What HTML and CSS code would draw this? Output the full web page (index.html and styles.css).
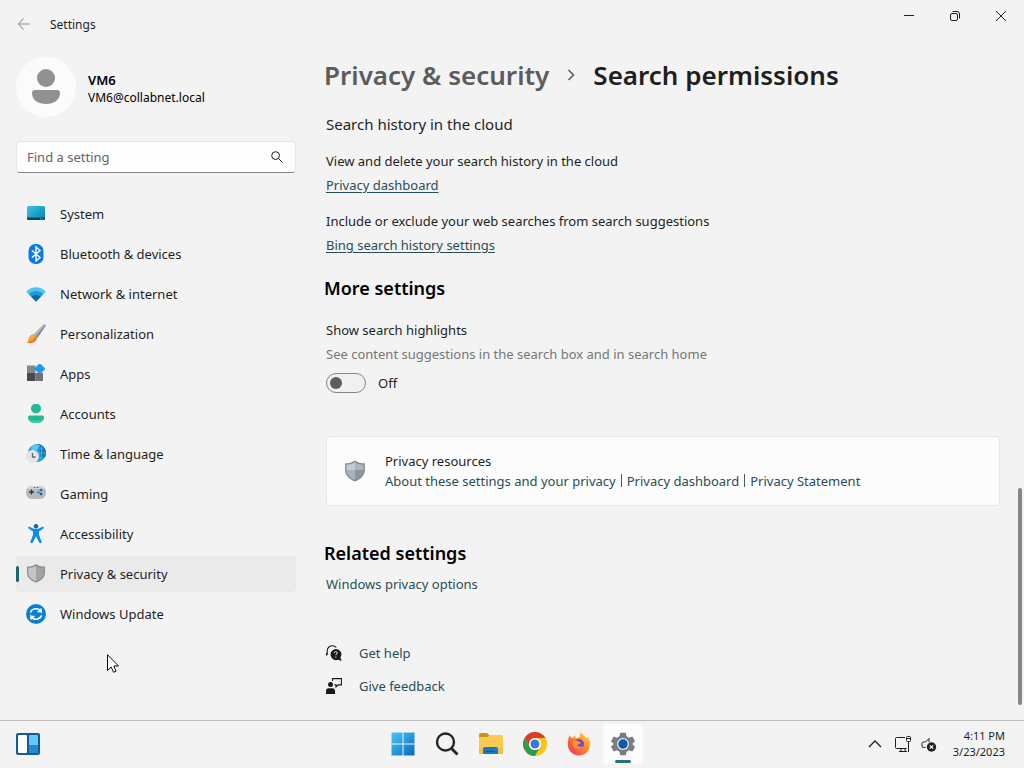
FILE: index.html
```html
<!DOCTYPE html>
<html lang="en">
  <head>
    <meta charset="UTF-8" />
    <meta name="viewport" content="width=device-width, initial-scale=1.0" />
    <title>Settings</title>
    <link rel="stylesheet" href="styles.css" />
  </head>
  <body>
    <!-- Title bar -->
    <header class="titlebar">
      <button type="button" class="back" aria-label="Back" disabled>
        <svg width="14" height="14" viewBox="0 0 14 14"><path d="M13 7H1.500M6.500 1.500 1.200 7l5.300 5.500" fill="none" stroke="currentColor" stroke-width="1.300" /></svg>
      </button>
      <span class="app-name">Settings</span>
      <div class="window-buttons">
        <button type="button" aria-label="Minimize">
          <svg width="12" height="12" viewBox="0 0 12 12"><path d="M1 5.500h10" stroke="currentColor" /></svg>
        </button>
        <button type="button" aria-label="Restore">
          <svg width="12" height="12" viewBox="0 0 12 12" fill="none" stroke="currentColor"><rect x="1.500" y="3.500" width="7" height="7" rx="1.500" /><path d="M3.500 1.500h4.500a2.500 2.500 0 0 1 2.500 2.500v4.500" /></svg>
        </button>
        <button type="button" aria-label="Close">
          <svg width="12" height="12" viewBox="0 0 12 12"><path d="m1 1 10 10M11 1 1 11" stroke="currentColor" /></svg>
        </button>
      </div>
    </header>

    <div class="window">
      <!-- Sidebar -->
      <aside class="sidebar">
        <div class="account">
          <span class="avatar">
            <svg width="28" height="36" viewBox="0 0 28 36" fill="#919191"><circle cx="14" cy="9" r="9" /><path d="M3 21h22a3 3 0 0 1 3 3c0 7-6 11-14 11S0 31 0 24a3 3 0 0 1 3-3z" /></svg>
          </span>
          <div class="account-text">
            <div class="account-name">VM6</div>
            <div>VM6@collabnet.local</div>
          </div>
        </div>

        <form class="search">
          <input type="text" placeholder="Find a setting" aria-label="Find a setting" />
          <button type="button" aria-label="Search">
            <svg width="12" height="12" viewBox="0 0 12 12" fill="none" stroke="currentColor"><circle cx="4.600" cy="4.600" r="3.900" /><path d="m7.500 7.500 4 4" /></svg>
          </button>
        </form>

        <nav class="menu">
          <a href="#">
            <svg width="20" height="20" viewBox="0 0 20 20">
              <defs><linearGradient id="sys" x2="1" y2="1"><stop stop-color="#35c7e6" /><stop offset="1" stop-color="#0b7fb0" /></linearGradient></defs>
              <rect x="1" y="2" width="18" height="14" rx="1.500" fill="url(#sys)" /><path d="M1 13.500h18v1a1.500 1.500 0 0 1-1.500 1.500h-15A1.500 1.500 0 0 1 1 14.500z" fill="#0a4766" /><path d="M14 14.800h1m1 0h1" stroke="#58c7e8" />
            </svg>
            System
          </a>
          <a href="#">
            <svg width="20" height="20" viewBox="0 0 20 20"><rect x="2.500" width="15" height="20" rx="7" fill="#0a7ae6" /><path d="m6 6.500 8 7-4 3.500V3l4 3.500-8 7" fill="none" stroke="#fff" stroke-width="1.400" /></svg>
            Bluetooth &amp; devices
          </a>
          <a href="#">
            <svg width="20" height="20" viewBox="0 0 20 20"><path d="M0 7.500Q10-1 20 7.500L10 17.500z" fill="#4cc8f0" /><path d="M2.500 10Q10 4 17.500 10L10 17.500z" fill="#2098dc" /><path d="M5.300 12.800Q10 9 14.700 12.800L10 17.500z" fill="#1262ae" /></svg>
            Network &amp; internet
          </a>
          <a href="#">
            <svg width="20" height="20" viewBox="0 0 20 20"><path d="M17.500.8c1.500-1 2.700.2 1.800 1.700L11.500 14 7.600 10.500z" fill="#858a92" /><path d="M17.500.8c.7-.5 1.400-.4 1.800 0L9.500 12.200 7.600 10.500z" fill="#b5b8bd" /><path d="M7.600 10.300 11 13.500c.5 4-4.500 7-10.500 5 2-.6 1.800-2 2.300-4 .6-2.500 2.700-4 4.800-4.200z" fill="#ef8129" /><path d="M7.600 10.300 9 11.700c-.5 3-4 5-8.500 6.800 2-.6 1.800-2 2.300-4 .6-2.500 2.700-4 4.800-4.200z" fill="#f8a651" /></svg>
            Personalization
          </a>
          <a href="#">
            <svg width="20" height="20" viewBox="0 0 20 20"><path d="M1 1.500h8.500V9H1z" fill="#85888b" /><path d="M1 9h8.500v8H1z" fill="#484b4e" /><path d="M9.500 9H17v8H9.500z" fill="#707376" /><rect x="9.800" y=".8" width="8" height="8" rx="1" fill="#2199e4" transform="rotate(45 13.800 4.800)" /></svg>
            Apps
          </a>
          <a href="#">
            <svg width="20" height="20" viewBox="0 0 20 20"><circle cx="10" cy="4.500" r="5" fill="#24b994" /><path d="M4 11.500h12a2 2 0 0 1 2 2c0 3.700-3.500 5.500-8 5.500s-8-1.800-8-5.500a2 2 0 0 1 2-2z" fill="#24b994" /><path d="M2.200 15C4 17.500 16 17.500 17.800 15c-1 2.800-4 4-7.800 4s-6.800-1.200-7.800-4z" fill="#43cda7" /></svg>
            Accounts
          </a>
          <a href="#">
            <svg width="20" height="20" viewBox="0 0 20 20"><circle cx="11" cy="9" r="9" fill="#22a2d8" /><path d="M11 0a9 9 0 0 1 7.800 13.500c-3 .5-5-1-4.500-3.500s-2-4-3.300-5z" fill="#1678bd" /><path d="M5 3c3-3 7-3 9-1l-3 4-5 1z" fill="#55cce7" /><path d="M11 0v9m-6-4h12m-5 4h8M15.500 2v13" stroke="#64c7ea" stroke-width=".600" /><circle cx="6.500" cy="12.500" r="6.500" fill="#e5e5e7" /><path d="M6.500 9v4h3" fill="none" stroke="#646775" stroke-width="1.300" /></svg>
            Time &amp; language
          </a>
          <a href="#">
            <svg width="20" height="20" viewBox="0 0 20 20"><rect y="2" width="20" height="13" rx="6" fill="#b5babf" /><path d="M1 5c1-2 3-3 5-3h8c2 0 4 1 5 3z" fill="#d1d4d7" /><path d="M5.500 5.500v5M3 8h5" stroke="#33383d" stroke-width="1.300" /><path d="M8 3.500h1.500m1.500 0h1.500" stroke="#596069" /><circle cx="15" cy="6" r="1.500" fill="#1e79b8" /><circle cx="12.500" cy="8.500" r="1.300" fill="#4d83a8" /><circle cx="15" cy="10" r="1.300" fill="#155e9d" /></svg>
            Gaming
          </a>
          <a href="#">
            <svg width="20" height="20" viewBox="0 0 20 20"><circle cx="10" cy="2.200" r="2.200" fill="#1465ae" /><path d="m3.500 2.700 4 2.100h5l4-2.100c1.200-.4 1.800 1.200.9 1.800L13 7.500v3.200l2.600 7c.3 1.500-1.700 2-2.400.7L10 12.300l-3.200 6.100c-.7 1.300-2.700.8-2.400-.7l2.600-7V7.500L2.600 4.500c-.9-.6-.3-2.200.9-1.800z" fill="#0c8ce4" /></svg>
            Accessibility
          </a>
          <a href="#" class="active" aria-current="page">
            <svg width="20" height="20" viewBox="0 0 20 20"><path d="M10 0c2.500 2 5.500 2.500 9 2.500v6c0 5-4 8.500-9 10-5-1.500-9-5-9-10v-6C4.500 2.500 7.500 2 10 0z" fill="#8b8e91" /><path d="M10 1.700C7.800 3.200 5.200 3.700 2.300 3.800v4.700c0 4.300 3.300 7.200 7.700 8.600z" fill="#c3c5c7" /><path d="M10 1.700c2.200 1.500 4.800 2 7.700 2.100v4.700c0 4.300-3.300 7.200-7.700 8.600z" fill="#a1a4a7" /></svg>
            Privacy &amp; security
          </a>
          <a href="#">
            <svg width="20" height="20" viewBox="0 0 20 20"><circle cx="10" cy="10" r="10" fill="#0d7fd3" /><path d="M4.500 8.500C6 4 12.500 3.500 15 7.500V4.500M15 7.500h-3.500M15.500 11.500C14 16 7.500 16.500 5 12.500v3M5 12.500h3.500" fill="none" stroke="#fff" stroke-width="1.500" /></svg>
            Windows Update
          </a>
        </nav>
      </aside>

      <!-- Page content -->
      <main class="content">
        <h1 class="breadcrumb">
          <a href="#">Privacy &amp; security</a>
          <svg width="8" height="12" viewBox="0 0 8 12"><path d="m1.500 1 5 5-5 5" fill="none" stroke="#5c5c5c" stroke-width="1.600" /></svg>
          <span>Search permissions</span>
        </h1>

        <section class="cloud">
          <h3>Search history in the cloud</h3>
          <div class="entry">
            <p>View and delete your search history in the cloud</p>
            <a href="#" class="underlined">Privacy dashboard</a>
          </div>
          <div class="entry">
            <p>Include or exclude your web searches from search suggestions</p>
            <a href="#" class="underlined">Bing search history settings</a>
          </div>
        </section>

        <section class="more">
          <h2>More settings</h2>
          <p>Show search highlights</p>
          <p class="hint">See content suggestions in the search box and in search home</p>
          <label class="toggle">
            <input type="checkbox" role="switch" aria-label="Show search highlights" />
            <span>Off</span>
          </label>
        </section>

        <section class="card">
          <svg width="22" height="22" viewBox="0 0 20 20"><path d="M10 .5c2.500 2 5.500 2.500 9 2.500v6c0 5-4 8.500-9 10.500C5 17.500 1 14 1 9V3c3.500 0 6.500-.5 9-2.500z" fill="#858b91" /><path d="M10 2C7.500 3.700 5 4 2.200 4.200V9H10z" fill="#c0cdd5" /><path d="M10 2c2.500 1.700 5 2 7.800 2.200V9H10z" fill="#adb5bc" /><path d="M2.200 9H10v9.200C5.500 16.500 2.500 13.500 2.200 9z" fill="#a9b3ba" /><path d="M17.800 9H10v9.200c4.500-1.700 7.500-4.700 7.800-9.200z" fill="#8c949c" /></svg>
          <div>
            <p>Privacy resources</p>
            <div class="links">
              <a href="#">About these settings and your privacy</a>
              <a href="#">Privacy dashboard</a>
              <a href="#">Privacy Statement</a>
            </div>
          </div>
        </section>

        <section class="related">
          <h2>Related settings</h2>
          <a href="#">Windows privacy options</a>
        </section>

        <div class="support">
          <a href="#">
            <svg width="16" height="16" viewBox="0 0 16 16"><path d="M1.200 10V6C1.200 2.500 4 .7 6.500.7c1.800 0 3 .6 3.800 1.800M.5 8v2.500" fill="none" stroke="#1a1a1a" stroke-width="1.100" /><path d="M9.700 4a5.500 5.500 0 0 1 4.700 8.600L15.700 16l-3.500-1.200A5.600 5.600 0 1 1 9.700 4z" fill="#1a1a1a" /><path d="M8.200 8c.2-2 3.200-1.800 3 0-.1 1-1.400 1-1.400 2.200M9.800 11.500v1.100" fill="none" stroke="#f3f3f3" /></svg>
            Get help
          </a>
          <a href="#">
            <svg width="16" height="16" viewBox="0 0 16 16"><circle cx="4.500" cy="6.500" r="2.500" fill="#1a1a1a" /><path d="M2.500 10.200H6.500q2.500 0 2.500 3V16H0v-2.800q0-3 2.500-3z" fill="#1a1a1a" /><path d="M6.500 3V.6h8.900v6.300h-3.200L10 9V6.900H8.500" fill="none" stroke="#1a1a1a" stroke-width="1.100" /></svg>
            Give feedback
          </a>
        </div>
      </main>

      <div class="scrollbar"><div class="thumb"></div></div>
    </div>

    <!-- Taskbar -->
    <footer class="taskbar">
      <button type="button" class="widgets" aria-label="Widgets">
        <svg width="24" height="22" viewBox="0 0 24 22"><rect width="24" height="22" rx="2" fill="#155b91" /><rect x="2" y="2" width="9" height="18" rx="1" fill="#fafcfd" /><rect x="13" y="2" width="9" height="18" rx="1" fill="#64c9f7" /><path d="M13 12h9v7a1 1 0 0 1-1 1h-7a1 1 0 0 1-1-1z" fill="#2388d6" /></svg>
      </button>

      <div class="apps">
        <button type="button" aria-label="Start">
          <svg width="24" height="24" viewBox="0 0 24 24">
            <defs><linearGradient id="win" gradientUnits="userSpaceOnUse" x1="0" y1="0" x2="24" y2="24"><stop stop-color="#4dcaf4" /><stop offset="1" stop-color="#0467c1" /></linearGradient></defs>
            <path d="M1 .5h10.500V11.500H.5V1zM12.500.5h11v11h-11zM.5 12.500h11v11H.5zM12.500 12.500h11v11h-11z" fill="url(#win)" />
          </svg>
        </button>
        <button type="button" aria-label="Search">
          <svg width="24" height="24" viewBox="0 0 24 24" fill="none" stroke="#252525"><circle cx="10.500" cy="10" r="8.500" stroke-width="2.400" /><path d="m16.500 16.500 6 6" stroke-width="2.800" /></svg>
        </button>
        <button type="button" aria-label="File Explorer">
          <svg width="24" height="24" viewBox="0 0 24 24"><path d="M0 3q0-2 2-2h6l3 3-2 3H0z" fill="#c79518" /><path d="M0 5h9l2-2h12q1 0 1 1v17q0 1-1 1H1q-1 0-1-1z" fill="#f9cb50" /><path d="M0 16h24v5q0 1-1 1H1q-1 0-1-1z" fill="#f0be45" /><path d="M4 22v-5q0-2 2-2h11q2 0 2 2v5z" fill="#1a78c5" /><path d="M7 19.500h9" stroke="#115493" /></svg>
        </button>
        <button type="button" aria-label="Chrome">
          <svg width="24" height="24" viewBox="0 0 24 24"><circle cx="12" cy="12" r="12" fill="#fbc41b" /><path d="M1.600 6a12 12 0 0 1 20.800 0H12a6 6 0 0 0-5.200 9z" fill="#dc3d31" /><path d="M1.600 6a12 12 0 0 0 10.400 18l5.200-9a6 6 0 0 1-10.400 0z" fill="#2f9c50" /><circle cx="12" cy="12" r="6" fill="#fff" /><circle cx="12" cy="12" r="4.500" fill="#3879dc" /></svg>
        </button>
        <button type="button" aria-label="Firefox">
          <svg width="24" height="24" viewBox="0 0 24 24">
            <defs><linearGradient id="fox" x1="1" x2="0" y2="1"><stop stop-color="#ffe344" /><stop offset=".450" stop-color="#ff8b29" /><stop offset="1" stop-color="#ee2463" /></linearGradient></defs>
            <path d="M2.500 3.500 4.500 6l1.800-.3L8.500 3v3.500L13 5c-.5-2 0-3.500 1.500-4.500 1 2.500 3.500 3.500 5.500 5.500l.5-1.500c2.500 3 3 6 2.500 9.500C22 20 17.500 23.500 12 23.500S1 19 1 13c0-4 0-6.500 1.500-9.500z" fill="url(#fox)" /><circle cx="12" cy="12" r="5" fill="#7b45c5" /><path d="M6 9.500c2.500-1.500 4-1 5.500.3l2.500.4c-.6 1.500-2 1.500-3 2.300-1.500 1.500.5 3 5 2-2 3.500-9 3-10-1.500z" fill="#ff9a28" />
          </svg>
        </button>
        <button type="button" class="open" aria-label="Settings">
          <svg width="24" height="24" viewBox="0 0 24 24"><path d="M9.200.8h5.600l.8 3.500 2.400 1.400 3.400-1.100 2.600 4.700-2.600 2.500v.4l2.600 2.500-2.600 4.700-3.400-1.100-2.400 1.400-.8 3.500H9.200l-.8-3.500L6 18.300l-3.400 1.100L0 14.700l2.600-2.500v-.4L0 9.300l2.600-4.700L6 5.700l2.400-1.400z" fill="#797d81" /><circle cx="12" cy="12" r="6" fill="#dfeaf3" /><circle cx="12" cy="12" r="4.700" fill="#1057a5" /></svg>
        </button>
      </div>

      <div class="tray">
        <button type="button" aria-label="Show hidden icons">
          <svg width="14" height="8" viewBox="0 0 14 8"><path d="m1 7 6-6 6 6" fill="none" stroke="currentColor" stroke-width="1.300" /></svg>
        </button>
        <button type="button" class="network" aria-label="Network">
          <svg width="16" height="16" viewBox="0 0 16 16" fill="none" stroke="currentColor"><path d="M10 1.500H1.500q-1 0-1 1v9q0 1 1 1h10M4 15.500h8M6 12.500v3m4-3v3M13.500 5.500V16" /><rect x="11.500" y=".500" width="4" height="5" rx="1" /><path d="M11.500 2.500h4" /></svg>
        </button>
        <button type="button" aria-label="Volume muted">
          <svg width="16" height="16" viewBox="0 0 16 16"><path d="M4.500 11.500H2.500q-1.500 0-1.500-1.500V7.500Q1 6 2.500 6h2L8 2.500V6" fill="none" stroke="currentColor" /><circle cx="10.500" cy="11" r="4.700" fill="#222" /><path d="m8.800 9.300 3.400 3.400m0-3.400-3.400 3.400" stroke="#fff" stroke-width="1.200" /></svg>
        </button>
        <div class="clock">
          <div>4:11 PM</div>
          <div>3/23/2023</div>
        </div>
      </div>
    </footer>

    <!-- Mouse pointer -->
    <svg class="pointer" width="12" height="19" viewBox="0 0 12 19"><path d="M.5.700v15.800l3.700-3.500 2.400 5.300 2.500-1.100-2.300-5.200h4.700z" fill="#fff" stroke="#111" /></svg>
  </body>
</html>
```
FILE: styles.css
```css
* {
  box-sizing: border-box;
}

body {
  position: relative;
  display: flex;
  flex-direction: column;
  min-height: 100vh;
  margin: 0;
  background-color: #f3f3f3;
  color: #1f1f1f;
  font-family: "Noto Sans", "Open Sans", sans-serif;
  font-size: 13px;
  line-height: 20px;
}

h1,
h2,
h3,
p {
  margin: 0;
}

a {
  color: #284e53;
  text-decoration: none;
}

button {
  display: flex;
  align-items: center;
  justify-content: center;
  padding: 0;
  border: 0;
  background: none;
  color: inherit;
}

svg {
  display: block;
  flex-shrink: 0;
}

/* Title bar */
.titlebar {
  display: flex;
  align-items: center;
  height: 48px;
  padding-left: 16px;
}

.back {
  width: 16px;
  margin-right: 18px;
  color: #b0b0b0;
}

.app-name {
  padding-top: 2px;
  font-size: 12px;
}

.window-buttons {
  display: flex;
  align-self: flex-start;
  margin-left: auto;
}

.window-buttons button {
  width: 46px;
  height: 32px;
}

/* Window */
.window {
  display: flex;
  flex: 1;
}

.sidebar {
  width: 296px;
  padding: 9px 0 0 16px;
}

.account {
  display: flex;
  align-items: center;
  gap: 12px;
  color: #000;
  font-size: 12px;
  line-height: 18px;
}

.account-text {
  padding-top: 3px;
}

.avatar {
  display: flex;
  align-items: center;
  justify-content: center;
  width: 60px;
  height: 60px;
  border-radius: 50%;
  background-color: #fbfbfb;
}

.account-name {
  font-size: 13px;
  font-weight: 600;
}

.search {
  display: flex;
  align-items: center;
  height: 32px;
  margin-top: 24px;
  padding: 0 12px 0 10px;
  border: 1px solid #e6e6e6;
  border-bottom-color: #868686;
  border-radius: 4px;
  background-color: #fdfdfd;
}

.search input {
  flex: 1;
  min-width: 0;
  padding: 0;
  border: 0;
  outline: 0;
  background: none;
  font: inherit;
}

.search input::placeholder {
  color: #666;
}

.menu {
  display: flex;
  flex-direction: column;
  gap: 4px;
  margin-top: 23px;
}

.menu a {
  display: flex;
  align-items: center;
  gap: 14px;
  height: 36px;
  padding-left: 10px;
  border-radius: 4px;
  color: #1f1f1f;
}

.menu a.active {
  position: relative;
  background-color: #eaeaea;
}

.menu a.active::before {
  content: "";
  position: absolute;
  left: 0;
  width: 3px;
  height: 16px;
  border-radius: 2px;
  background-color: #1b666b;
}

/* Content */
.content {
  flex: 1;
  padding: 7px 18px 24px 30px;
}

.breadcrumb {
  display: flex;
  align-items: center;
  gap: 18px;
  font-size: 26px;
  font-weight: 600;
  line-height: 40px;
}

.breadcrumb a {
  color: #5c5c5c;
}

h1,
h2 {
  margin-left: -2px;
}

h2 {
  color: #000;
  font-size: 18px;
  font-weight: 600;
  line-height: 28px;
}

h3 {
  font-size: 15px;
  font-weight: 400;
  line-height: 24px;
}

.cloud {
  margin-top: 17px;
}

.entry {
  margin-top: 16px;
}

h3 + .entry {
  margin-top: 15px;
}

.entry p {
  margin-bottom: 4px;
}

.underlined {
  text-decoration: underline;
  text-underline-offset: 2px;
}

.more {
  margin-top: 19px;
}

.more h2 {
  margin-bottom: 18px;
}

.more .hint {
  margin-top: 4px;
  color: #767676;
}

.toggle {
  display: flex;
  align-items: center;
  gap: 12px;
  width: max-content;
  margin-top: 9px;
}

.toggle input {
  display: flex;
  align-items: center;
  width: 40px;
  height: 20px;
  margin: 0;
  padding-left: 3px;
  border: 1px solid #868686;
  border-radius: 10px;
  background-color: #f0f0f0;
  appearance: none;
}

.toggle input::before {
  content: "";
  width: 12px;
  height: 12px;
  border-radius: 50%;
  background-color: #5d5d5d;
}

.toggle input:checked {
  justify-content: flex-end;
  padding: 0 3px 0 0;
}

.card {
  display: flex;
  align-items: center;
  gap: 19px;
  min-height: 70px;
  margin-top: 43px;
  padding: 0 17px;
  border: 1px solid #e7e7e7;
  border-radius: 4px;
  background-color: #fcfcfc;
}

.links {
  display: flex;
  flex-wrap: wrap;
}

.links a + a {
  display: flex;
  align-items: center;
}

.links a + a::before {
  content: "";
  width: 1px;
  height: 13px;
  margin: 0 5px 2px;
  background-color: #555;
}

.related {
  margin-top: 33px;
}

.related a {
  display: block;
  margin-top: 7px;
}

.support {
  display: flex;
  flex-direction: column;
  align-items: flex-start;
  gap: 13px;
  margin-top: 49px;
}

.support a {
  display: flex;
  align-items: center;
  gap: 17px;
}

/* Scrollbar */
.scrollbar {
  display: flex;
  flex-direction: column;
  justify-content: flex-end;
  width: 6px;
  padding: 0 2px 15px 0;
}

.thumb {
  height: 33%;
  border-radius: 2px;
  background-color: #868686;
}

/* Taskbar */
.taskbar {
  display: grid;
  grid-template-columns: 1fr auto 1fr;
  align-items: center;
  height: 48px;
  margin-top: auto;
  padding-bottom: 1px;
  border-top: 1px solid #bdbdbd;
  box-sizing: content-box;
  height: 46px;
}

.widgets {
  justify-self: start;
  margin-left: 16px;
}

.apps {
  display: flex;
  gap: 4px;
  padding-left: 2px;
}

.apps button {
  width: 40px;
  height: 40px;
}

.apps .open {
  position: relative;
  border-radius: 4px;
  background-color: #fcfcfc;
}

.open::after {
  content: "";
  position: absolute;
  bottom: 1px;
  width: 16px;
  height: 3px;
  border-radius: 2px;
  background-color: #25737a;
}

.tray {
  display: flex;
  align-items: center;
  justify-self: end;
  gap: 10px;
  padding-right: 19px;
}

.tray .network {
  margin-left: 3px;
}

.clock {
  margin-left: 6px;
  font-size: 11px;
  line-height: 16px;
  text-align: right;
}

/* Pointer lies over the page */
.pointer {
  position: absolute;
  top: 654px;
  left: 107px;
}
```
